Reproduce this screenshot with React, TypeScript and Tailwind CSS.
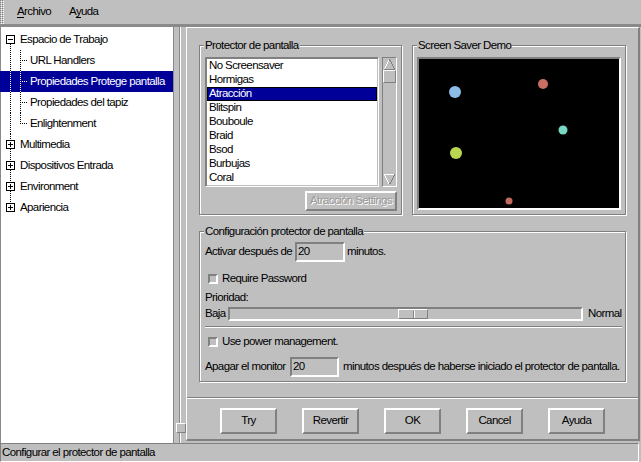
import React from "react";

type RootRow = { kind: "root"; text: string; icon: "minus" | "plus"; first?: boolean; last?: boolean };
type ChildRow = { kind: "child"; text: string; last?: boolean; selected?: boolean };
type Row = RootRow | ChildRow;

const rows: Row[] = [
  { kind: "root", text: "Espacio de Trabajo", icon: "minus", first: true },
  { kind: "child", text: "URL Handlers" },
  { kind: "child", text: "Propiedades Protege pantalla", selected: true },
  { kind: "child", text: "Propiedades del tapiz" },
  { kind: "child", text: "Enlightenment", last: true },
  { kind: "root", text: "Multimedia", icon: "plus" },
  { kind: "root", text: "Dispositivos Entrada", icon: "plus" },
  { kind: "root", text: "Environment", icon: "plus" },
  { kind: "root", text: "Apariencia", icon: "plus", last: true },
];

const listItems = [
  "No Screensaver",
  "Hormigas",
  "Atracción",
  "Blitspin",
  "Bouboule",
  "Braid",
  "Bsod",
  "Burbujas",
  "Coral",
];

function RootConnector({ row }: { row: RootRow }) {
  return (
    <svg width="20" height="21" className="shrink-0" shapeRendering="crispEdges">
      {!row.first && <line x1="10.5" y1="0" x2="10.5" y2="6" stroke="#000" strokeDasharray="1 1" />}
      {!row.last && <line x1="10.5" y1="15" x2="10.5" y2="21" stroke="#000" strokeDasharray="1 1" />}
      <rect x="6.5" y="6.5" width="8" height="8" fill="#fff" stroke="#000" />
      <line x1="8" y1="10.5" x2="13" y2="10.5" stroke="#000" />
      {row.icon === "plus" && <line x1="10.5" y1="8" x2="10.5" y2="13" stroke="#000" />}
    </svg>
  );
}

function ChildConnector({ row }: { row: ChildRow }) {
  const c = row.selected ? "#fff" : "#000";
  return (
    <svg width="30" height="21" className="shrink-0" shapeRendering="crispEdges">
      <line x1="10.5" y1="0" x2="10.5" y2="21" stroke={c} strokeDasharray="1 1" />
      <line x1="20.5" y1="0" x2="20.5" y2={row.last ? 11 : 21} stroke={c} strokeDasharray="1 1" />
      <line x1="22" y1="10.5" x2="28" y2="10.5" stroke={c} strokeDasharray="1 1" />
    </svg>
  );
}

function Frame({ label, className, children }: { label: string; className: string; children: React.ReactNode }) {
  return (
    <div className={"relative shrink-0 border border-[#808080] shadow-[inset_1px_1px_0_#fff,1px_1px_0_#fff] " + className}>
      <span className="absolute left-[4px] top-[-7px] bg-[#bfbfbf] px-[1px] leading-[13px] whitespace-nowrap">{label}</span>
      {children}
    </div>
  );
}

function Entry({ className, value }: { className: string; value: string }) {
  return (
    <div className={"h-[20px] shrink-0 border-2 border-t-[#808080] border-l-[#808080] border-r-white border-b-white flex items-center pl-[1px] " + className}>
      {value}
    </div>
  );
}

function Check({ label }: { label: string }) {
  return (
    <div className="h-[20px] flex items-center pl-[3px]">
      <div className="w-[10px] h-[10px] border-2 border-t-[#808080] border-l-[#808080] border-r-white border-b-white" />
      <span className="ml-[4px]">{label}</span>
    </div>
  );
}

export default function App() {
  return (
    <div className="w-[641px] h-[462px] bg-[#bfbfbf] flex flex-col overflow-hidden text-[11.5px] tracking-[-0.6px] leading-none text-black font-['Liberation_Sans',Arial,sans-serif] select-none">
      {/* Menu bar */}
      <div className="h-[27px] shrink-0 flex border-b-[3px] border-b-[#8a8a8a]">
        <svg width="4" height="24" className="shrink-0">
          <defs>
            <pattern id="grip" width="2" height="2" patternUnits="userSpaceOnUse">
              <rect width="1" height="1" fill="#808080" />
              <rect x="1" y="1" width="1" height="1" fill="#fff" />
            </pattern>
          </defs>
          <rect x="0" y="0" width="4" height="24" fill="url(#grip)" />
        </svg>
        <div className="flex items-center pl-[13px]">
          <span className="w-[52px]">
            <span className="underline underline-offset-[2px] [text-decoration-skip-ink:none]">A</span>rchivo
          </span>
          <span>
            A<span className="underline underline-offset-[2px] [text-decoration-skip-ink:none]">y</span>uda
          </span>
        </div>
      </div>

      {/* Main */}
      <div className="flex h-[416px] shrink-0">
        {/* Tree */}
        <div className="w-[173px] shrink-0 bg-white pt-[2px] shadow-[inset_1px_0_0_#8a8a8a]">
          {rows.map((r, i) => (
            <div
              key={i}
              className={
                "h-[21px] flex items-center whitespace-nowrap " +
                (r.kind === "child" && r.selected ? "bg-[#000099] text-white" : "")
              }
            >
              {r.kind === "root" ? <RootConnector row={r} /> : <ChildConnector row={r} />}
              <span>{r.text}</span>
            </div>
          ))}
        </div>

        {/* Pane gutter */}
        <div className="relative w-[13px] shrink-0 flex">
          <div className="w-[1px] bg-[#8a8a8a]" />
          <div className="w-[5px]" />
          <div className="w-[1px] bg-[#8a8a8a]" />
          <div className="w-[1px] bg-white" />
          <div className="flex-1" />
          <div className="absolute left-[3px] top-[396px] w-[10px] h-[10px] border border-t-white border-l-white border-r-[#808080] border-b-[#808080] bg-[#bfbfbf]" />
        </div>

        {/* Right panel */}
        <div className="flex-1 mr-[1px] mb-[2px] flex flex-col border-t border-l border-r-2 border-b-2 border-t-white border-l-white border-r-[#808080] border-b-[#808080]">
          <div className="flex gap-[10px] pt-[17px] pl-[12px]">
            <Frame label="Protector de pantalla" className="w-[203px] h-[170px] pt-[11px] pl-[5px] pr-[4px] flex flex-col">
              <div className="flex">
                <div className="w-[174px] h-[130px] shrink-0 bg-white border border-t-[#808080] border-l-[#808080] border-r-white border-b-white shadow-[inset_1px_1px_0_#808080,inset_-1px_-1px_0_#bfbfbf] p-[1px]">
                  {listItems.map((it) => (
                    <div
                      key={it}
                      className={
                        "h-[14px] pl-[2px] flex items-center whitespace-nowrap " +
                        (it === "Atracción" ? "bg-[#000099] text-white shadow-[inset_0_0_0_1px_#000]" : "")
                      }
                    >
                      {it}
                    </div>
                  ))}
                </div>
                <div className="ml-[3px] w-[15px] h-[130px] flex flex-col border border-t-[#808080] border-l-[#808080] border-r-white border-b-white py-[1px]">
                  <svg width="13" height="11" className="shrink-0" shapeRendering="crispEdges">
                    <line x1="1" y1="10.5" x2="6.5" y2="0.5" stroke="#fff" />
                    <line x1="6.5" y1="0.5" x2="12" y2="10.5" stroke="#808080" />
                    <line x1="1" y1="10.5" x2="12" y2="10.5" stroke="#808080" />
                  </svg>
                  <div className="h-[13px] shrink-0 border border-t-white border-l-white border-r-[#808080] border-b-[#808080]" />
                  <div className="flex-1" />
                  <svg width="13" height="11" className="shrink-0" shapeRendering="crispEdges">
                    <line x1="1" y1="0.5" x2="12" y2="0.5" stroke="#fff" />
                    <line x1="1" y1="0.5" x2="6.5" y2="10.5" stroke="#fff" />
                    <line x1="6.5" y1="10.5" x2="12" y2="0.5" stroke="#808080" />
                  </svg>
                </div>
              </div>
              <div className="mt-[4px] flex justify-end">
                <div className="w-[92px] h-[20px] border-2 border-t-white border-l-white border-r-[#808080] border-b-[#808080] flex items-center justify-center text-[#9a9a9a] [text-shadow:1px_1px_0_#fff] whitespace-nowrap">
                  Atracción Settings
                </div>
              </div>
            </Frame>

            <Frame label="Screen Saver Demo" className="w-[214px] h-[170px] pt-[11px] px-[4px] pb-[4px] flex">
              <div className="flex-1 bg-black border-2 border-t-[#808080] border-l-[#808080] border-r-white border-b-white">
                <svg width="200" height="149">
                  <circle cx="36" cy="33" r="6" fill="#8cbce8" />
                  <circle cx="124" cy="25" r="5" fill="#c96e62" />
                  <circle cx="144" cy="71" r="4.5" fill="#78d8c6" />
                  <circle cx="37" cy="94" r="6" fill="#b9d750" />
                  <circle cx="90" cy="142" r="3.5" fill="#c26a5c" />
                </svg>
              </div>
            </Frame>
          </div>

          <Frame label="Configuración protector de pantalla" className="ml-[12px] mt-[16px] w-[427px] h-[151px] pl-[5px] pr-[3px] pt-[10px] flex flex-col">
            <div className="h-[20px] flex items-center whitespace-nowrap">
              <span className="w-[90px] shrink-0">Activar después de</span>
              <Entry className="w-[50px]" value="20" />
              <span className="ml-[2px]">minutos.</span>
            </div>
            <div className="mt-[7px]">
              <Check label="Require Password" />
            </div>
            <div className="mt-[2px] h-[14px] flex items-center">Prioridad:</div>
            <div className="mt-[2px] h-[14px] flex items-center whitespace-nowrap">
              <span className="w-[23px] shrink-0">Baja</span>
              <div className="w-[355px] h-[14px] shrink-0 border-2 border-t-[#808080] border-l-[#808080] border-r-white border-b-white flex">
                <div className="ml-[168px] w-[30px] border border-t-white border-l-white border-r-[#808080] border-b-[#808080] flex items-center pl-[14px]">
                  <div className="w-[2px] h-[7px] border-l border-l-[#808080] border-r border-r-white" />
                </div>
              </div>
              <span className="ml-[5px]">Normal</span>
            </div>
            <div className="mt-[5px] h-[2px] border-t border-t-[#808080] border-b border-b-white" />
            <div className="mt-[4px]">
              <Check label="Use power management." />
            </div>
            <div className="mt-[5px] h-[20px] flex items-center whitespace-nowrap">
              <span className="w-[85px] shrink-0">Apagar el monitor</span>
              <Entry className="w-[49px]" value="20" />
              <span className="ml-[4px]">minutos después de haberse iniciado el protector de pantalla.</span>
            </div>
          </Frame>

          <div className="mt-[15px] h-[2px] border-t border-t-[#808080] border-b border-b-white" />

          <div className="mt-[9px] flex justify-center gap-[25px]">
            {["Try", "Revertir", "OK", "Cancel", "Ayuda"].map((b) => (
              <div
                key={b}
                className="w-[57px] h-[26px] border-2 border-t-white border-l-white border-r-[#808080] border-b-[#808080] flex items-center justify-center"
              >
                {b}
              </div>
            ))}
          </div>
        </div>
      </div>

      {/* Status bar */}
      <div className="h-[19px] mr-[2px] shrink-0 border border-t-[#808080] border-l-[#808080] border-r-white border-b-white flex items-center pl-[1px] whitespace-nowrap">
        Configurar el protector de pantalla
      </div>
    </div>
  );
}
